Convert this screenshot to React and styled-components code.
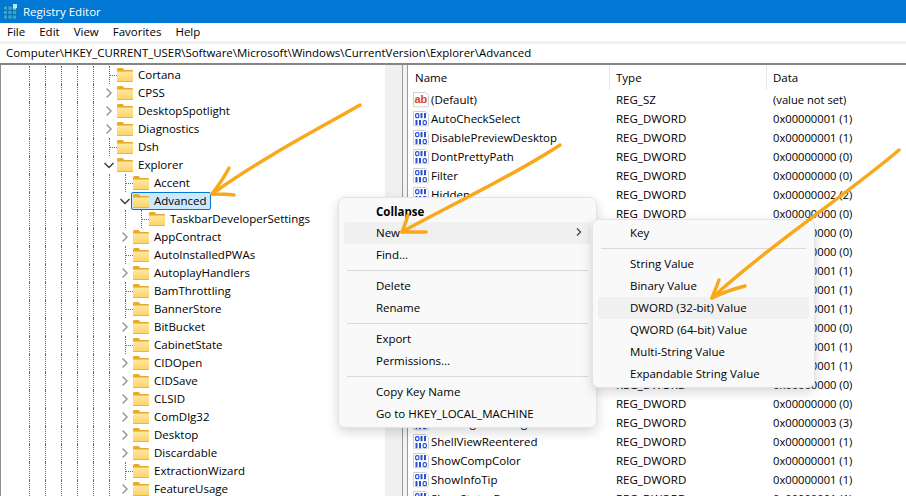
import React from "react";
import styled, { createGlobalStyle } from "styled-components";

const Global = createGlobalStyle`
  html, body { margin: 0; padding: 0; background: #fff; }
  body { font-family: "Open Sans", "Noto Sans", "Liberation Sans", sans-serif; font-size: 11.5px; color: #000; }
  * { box-sizing: border-box; }
`;

const Window = styled.div`
  position: relative; width: 906px; height: 496px; overflow: hidden;
  display: flex; flex-direction: column; background: #fff;
`;
const TitleBar = styled.div`
  height: 23px; flex: none; background: #0078d4; color: #fff;
  display: flex; align-items: center; gap: 6px; padding-left: 3px; font-size: 11.5px;
`;
const MenuBar = styled.div`
  height: 18px; flex: none; display: flex; align-items: center; gap: 14px; padding: 0 0 2px 7px; background: #fff;
`;
const AddressBar = styled.div`
  flex: none; height: 19px; margin-top: 3px; background: #fff; display: flex; align-items: center;
  padding: 0 0 2px 6px; white-space: nowrap; box-shadow: 0 -3px 0 #f0f0f0; font-size: 11.45px;
`;
const Body = styled.div`
  flex: 1; min-height: 0; display: flex; border-top: 2px solid #858585;
`;
const TreePane = styled.div`
  width: 385px; flex: none; border-left: 1px solid #8a8f96; overflow: hidden; padding-top: 1px;
`;
const Scrollbar = styled.div` width: 17px; flex: none; background: #f0f0f0; `;
const Splitter = styled.div`
  width: 6px; flex: none; background: #f3f3f3; border-left: 1px solid #9a9a9a; border-right: 1px solid #9a9a9a;
`;
const ListPane = styled.div` flex: 1; min-width: 0; overflow: hidden; padding-top: 1px; `;

const TreeRowBox = styled.div`
  height: 18px; display: flex; align-items: center; padding-left: 20px; white-space: nowrap;
`;
const Guide = styled.div`
  width: 16px; height: 18px; flex: none; position: relative;
  &::before { content: ""; position: absolute; left: 8px; top: 0; bottom: 0; border-left: 1px dotted #6e6e6e; }
`;
const Stub = styled(Guide)`
  &::after { content: ""; position: absolute; left: 9px; right: 0; top: 9px; border-top: 1px dotted #6e6e6e; }
`;
const Toggle = styled.div`
  width: 16px; height: 18px; flex: none; display: flex; align-items: center; justify-content: center;
`;
const Node = styled.div`
  display: flex; align-items: center; gap: 5px; height: 18px;
  ${p => p.$selected ? `
    background: #cce8ff; border: 1px solid #0078d4; border-radius: 2px; margin-left: -2px; padding: 0 3px 0 1px;
  ` : ""}
`;
const Label = styled.span` padding-bottom: 2px; `;
const ListLabel = styled.span` padding-top: 0; `;

const ListHeader = styled.div`
  height: 24px; display: grid; grid-template-columns: 202px 157px 1fr; align-items: stretch;
`;
const HeadCell = styled.div`
  display: flex; align-items: center; padding: 0 0 2px ${p => p.$pad}px; border-right: ${p => p.$line ? "1px solid #e5e5e5" : "0"};
`;
const ListRow = styled.div`
  height: 19px; display: grid; grid-template-columns: 202px 157px 1fr; align-items: center; white-space: nowrap;
`;
const NameCell = styled.div` display: flex; align-items: center; gap: 2px; padding-left: 5px; `;
const TypeCell = styled.div` padding: 0 0 0 6px; `;
const DataCell = styled.div` padding: 0 0 0 6px; font-size: 11.2px; `;

const Menu = styled.div`
  position: absolute; left: ${p => p.$x}px; top: ${p => p.$y}px; width: ${p => p.$w}px;
  padding: 2px 5px; background: #f9f9f9; border: 1px solid #e4e4e4; border-radius: 7px;
  box-shadow: 0 4px 12px rgba(0,0,0,.16);
`;
const MenuItem = styled.div`
  height: 22px; display: flex; align-items: center; justify-content: space-between; border-radius: 4px;
  padding: 0 8px ${p => p.$bold ? 0 : 2}px ${p => p.$pad}px; white-space: nowrap;
  font-weight: ${p => p.$bold ? 700 : 400};
  background: ${p => p.$active ? "#f0f0f0" : "transparent"};
`;
const Separator = styled.div` height: 1px; margin: 4px 3px; background: #d9d9d9; `;
const Strokes = styled.svg` position: absolute; left: 0; top: 0; pointer-events: none; `;

const Folder = () => (
  <svg width="16" height="14" viewBox="0 0 16 14" style={{ flex: "none" }}>
    <defs>
      <linearGradient id="fb" x1="0" y1="0" x2="0" y2="1">
        <stop offset="0" stopColor="#ffe9a8" />
        <stop offset="1" stopColor="#fcd262" />
      </linearGradient>
    </defs>
    <path d="M0 1.500C0 .7.5 0 1.200 0H5.500L7.500 2H15c.6 0 1 .4 1 1v1H0Z" fill="#e8ac2c" />
    <rect x="0" y="3" width="16" height="11" rx="1" fill="url(#fb)" />
    <rect x="0" y="13" width="16" height="1" fill="#e9b543" />
    <rect x="0" y="3" width="16" height="1" fill="#f4c656" />
  </svg>
);
const Chevron = ({ open }) => open ? (
  <svg width="12" height="12" viewBox="0 0 12 12"><path d="M1.500 4 6 8.500 10.500 4" fill="none" stroke="#3c3c3c" strokeWidth="1.400" /></svg>
) : (
  <svg width="12" height="12" viewBox="0 0 12 12"><path d="M3.500 1.500 8 6 3.500 10.500" fill="none" stroke="#9a9a9a" strokeWidth="1.500" /></svg>
);
const AppIcon = () => (
  <svg width="14" height="15" viewBox="0 0 14 15" style={{ flex: "none" }}>
    {[0, 1, 2].flatMap(r => [0, 1, 2].map(c => (
      <rect key={`${r}${c}`} x={c * 4.500 + .5} y={r * 4.500 + 2} width="4" height="4" fill={c === 2 && r === 0 ? "#7fd1f0" : "#2fa8d8"} stroke="#0a5f92" strokeWidth=".5" />
    )))}
    <rect x="10" y="0" width="4" height="4" fill="#bfe9fb" />
  </svg>
);
const DocShape = () => (
  <path d="M.5 .5H12.500L15.500 3.500V14.500c-1.500 1-2.500-.5-4 .2s-2.500-.7-4 0-2.500 .5-4 0-2 .5-3 0Z" fill="#fff" stroke="#cfcfcf" />
);
const SzIcon = () => (
  <svg width="16" height="16" viewBox="0 0 16 16" style={{ flex: "none" }}>
    <DocShape />
    <text x="1.500" y="10.500" fontFamily="Liberation Sans, sans-serif" fontWeight="700" fontSize="11" fill="#d8431e">ab</text>
  </svg>
);
const Zero = ({ x, y }) => <rect x={x + .6} y={y + .6} width="3.300" height="4" rx="1.300" fill="none" stroke="#2b50d8" strokeWidth="1.200" />;
const One = ({ x, y }) => <rect x={x} y={y} width="2" height="5.200" fill="#2b50d8" />;
const DwordIcon = () => (
  <svg width="16" height="16" viewBox="0 0 16 16" style={{ flex: "none" }}>
    <DocShape />
    <Zero x={2} y={2} /><One x={7.500} y={2} /><One x={11} y={2} />
    <One x={2.500} y={9} /><One x={6} y={9} /><Zero x={9.500} y={9} />
  </svg>
);

const guides = n => Array.from({ length: n }, (_, i) => <Guide key={i} />);

const tree = [
  ["Cortana", 5, "leaf"], ["CPSS", 5, "closed"], ["DesktopSpotlight", 5, "closed"], ["Diagnostics", 5, "closed"],
  ["Dsh", 5, "leaf"], ["Explorer", 5, "open"],
  ["Accent", 6, "leaf"], ["Advanced", 6, "open", true], ["TaskbarDeveloperSettings", 7, "leaf"],
  ["AppContract", 6, "closed"], ["AutoInstalledPWAs", 6, "leaf"], ["AutoplayHandlers", 6, "closed"],
  ["BamThrottling", 6, "leaf"], ["BannerStore", 6, "leaf"], ["BitBucket", 6, "closed"], ["CabinetState", 6, "leaf"],
  ["CIDOpen", 6, "closed"], ["CIDSave", 6, "closed"], ["CLSID", 6, "closed"], ["ComDlg32", 6, "closed"],
  ["Desktop", 6, "closed"], ["Discardable", 6, "closed"], ["ExtractionWizard", 6, "leaf"], ["FeatureUsage", 6, "closed"],
];

const rows = [
  ["(Default)", "REG_SZ", "(value not set)"],
  ["AutoCheckSelect", "REG_DWORD", "0x00000001 (1)"],
  ["DisablePreviewDesktop", "REG_DWORD", "0x00000001 (1)"],
  ["DontPrettyPath", "REG_DWORD", "0x00000000 (0)"],
  ["Filter", "REG_DWORD", "0x00000000 (0)"],
  ["Hidden", "REG_DWORD", "0x00000002 (2)"],
  ["HideFileExt", "REG_DWORD", "0x00000000 (0)"],
  ["HideIcons", "REG_DWORD", "0x00000000 (0)"],
  ["IconsOnly", "REG_DWORD", "0x00000000 (0)"],
  ["ListviewAlphaSelect", "REG_DWORD", "0x00000001 (1)"],
  ["ListviewShadow", "REG_DWORD", "0x00000001 (1)"],
  ["MapNetDrvBtn", "REG_DWORD", "0x00000001 (1)"],
  ["MMTaskbarGlomLevel", "REG_DWORD", "0x00000000 (0)"],
  ["ReindexedProfile", "REG_DWORD", "0x00000001 (1)"],
  ["SeparateProcess", "REG_DWORD", "0x00000001 (1)"],
  ["ServerAdminUI", "REG_DWORD", "0x00000000 (0)"],
  ["ShellMigrationLevel", "REG_DWORD", "0x00000000 (0)"],
  ["ShellMigrationLog", "REG_DWORD", "0x00000003 (3)"],
  ["ShellViewReentered", "REG_DWORD", "0x00000001 (1)"],
  ["ShowCompColor", "REG_DWORD", "0x00000001 (1)"],
  ["ShowInfoTip", "REG_DWORD", "0x00000001 (1)"],
  ["ShowStatusBar", "REG_DWORD", "0x00000001 (1)"],
];

const TreeRow = ({ label, depth, kind, selected }) => (
  <TreeRowBox>
    {guides(depth)}
    {kind === "leaf" ? <Stub /> : <Toggle><Chevron open={kind === "open"} /></Toggle>}
    <Node $selected={selected}><Folder /><Label>{label}</Label></Node>
  </TreeRowBox>
);

export default function App() {
  return (
    <Window>
      <Global />
      <TitleBar><AppIcon />Registry Editor</TitleBar>
      <MenuBar>
        {["File", "Edit", "View", "Favorites", "Help"].map(m => <span key={m}>{m}</span>)}
      </MenuBar>
      <AddressBar>Computer\HKEY_CURRENT_USER\Software\Microsoft\Windows\CurrentVersion\Explorer\Advanced</AddressBar>
      <Body>
        <TreePane>
          {tree.map(([label, depth, kind, sel]) => (
            <TreeRow key={label} label={label} depth={depth} kind={kind} selected={sel} />
          ))}
        </TreePane>
        <Scrollbar />
        <Splitter />
        <ListPane>
          <ListHeader>
            <HeadCell $pad={7} $line>Name</HeadCell>
            <HeadCell $pad={6} $line>Type</HeadCell>
            <HeadCell $pad={6}>Data</HeadCell>
          </ListHeader>
          {rows.map(([n, t, d]) => (
            <ListRow key={n}>
              <NameCell>{t === "REG_SZ" ? <SzIcon /> : <DwordIcon />}<ListLabel>{n}</ListLabel></NameCell>
              <TypeCell>{t}</TypeCell>
              <DataCell>{d}</DataCell>
            </ListRow>
          ))}
        </ListPane>
      </Body>

      <Menu $x={338} $y={197} $w={259}>
        <MenuItem $pad={32} $bold>Collapse</MenuItem>
        <MenuItem $pad={32} $active>
          New
          <svg width="8" height="10" viewBox="0 0 8 10"><path d="M2 1.500 5.500 5 2 8.500" fill="none" stroke="#444" strokeWidth="1.300" /></svg>
        </MenuItem>
        <MenuItem $pad={32}>Find...</MenuItem>
        <Separator />
        <MenuItem $pad={32}>Delete</MenuItem>
        <MenuItem $pad={32}>Rename</MenuItem>
        <Separator />
        <MenuItem $pad={32}>Export</MenuItem>
        <MenuItem $pad={32}>Permissions...</MenuItem>
        <Separator />
        <MenuItem $pad={32}>Copy Key Name</MenuItem>
        <MenuItem $pad={32}>Go to HKEY_LOCAL_MACHINE</MenuItem>
      </Menu>

      <Menu $x={592} $y={219} $w={223}>
        <MenuItem $pad={32}>Key</MenuItem>
        <Separator />
        <MenuItem $pad={32}>String Value</MenuItem>
        <MenuItem $pad={32}>Binary Value</MenuItem>
        <MenuItem $pad={32} $active>DWORD (32-bit) Value</MenuItem>
        <MenuItem $pad={32}>QWORD (64-bit) Value</MenuItem>
        <MenuItem $pad={32}>Multi-String Value</MenuItem>
        <MenuItem $pad={32}>Expandable String Value</MenuItem>
      </Menu>

      <Strokes width="906" height="496" viewBox="0 0 906 496" fill="none" stroke="#f9a81c" strokeWidth="3.500" strokeLinecap="round" strokeLinejoin="round">
        <path d="M360 105C320 128 262 158 212 194" />
        <path d="M229 168C224 178 218 186 212 194 218 194 226 194 234 195" />
        <path d="M560 145C510 178 450 205 402 232" />
        <path d="M408 215C406 222 404 227 402 232 410 232 418 232 426 232" />
        <path d="M899 150C850 192 770 245 712 298" />
        <path d="M719 280C716 288 714 293 712 298 722 293 733 289 745 286" />
      </Strokes>
    </Window>
  );
}
